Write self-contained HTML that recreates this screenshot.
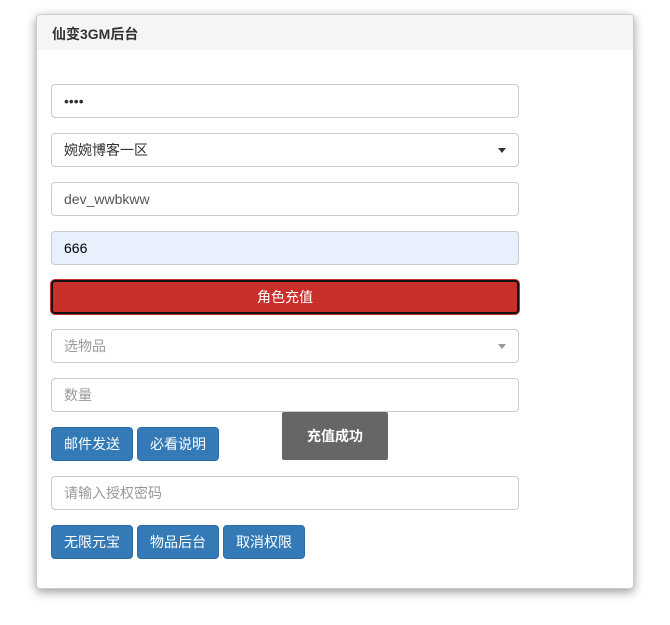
<!DOCTYPE html>
<html><head><meta charset="utf-8"><style>
*{box-sizing:border-box}
body{margin:0;width:670px;height:625px;background:#fff;font-family:"Liberation Sans","Noto Sans CJK SC",sans-serif;font-size:14px;color:#333;position:relative}
.panel{position:absolute;left:36px;top:14px;width:598px;height:575px;border:1px solid #ccc;border-radius:4px;background:#fff;box-shadow:0 3px 10px rgba(0,0,0,.4);overflow:hidden}
.hd{height:35px;background:#f5f5f5;padding:9px 15px;font-weight:bold;font-size:14px;color:#333}
.f{position:absolute;left:14px;width:468px;height:34px;border:1px solid #ccc;border-radius:4px;padding:6px 12px;line-height:20px;background:#fff}
.ph{color:#999}
.btn{position:absolute;height:34px;width:82px;border:1px solid #2e6da4;background:#337ab7;color:#fff;border-radius:4px;text-align:center;line-height:32px}
.caret{position:absolute;right:12px;top:14px;width:0;height:0;border-left:4px solid transparent;border-right:4px solid transparent;border-top:5px solid #333}
</style></head><body>
<div class="panel">
<div class="hd">仙变3GM后台</div>
<div class="f" style="top:69px">••••</div>
<div class="f" style="top:118px">婉婉博客一区<span class="caret"></span></div>
<div class="f" style="top:167px;color:#555">dev_wwbkww</div>
<div class="f" style="top:216px;background:#e8f0fe;color:#000">666</div>
<div class="f" style="top:265px;background:#c9302c;border:2px solid #111;box-shadow:0 0 0 1px #c9302c;color:#fff;text-align:center;line-height:18px">角色充值</div>
<div class="f ph" style="top:314px">选物品<span class="caret" style="border-top-color:#999"></span></div>
<div class="f ph" style="top:363px">数量</div>
<div class="btn" style="left:14px;top:412px">邮件发送</div>
<div class="btn" style="left:100px;top:412px">必看说明</div>
<div class="f ph" style="top:461px">请输入授权密码</div>
<div class="btn" style="left:14px;top:510px">无限元宝</div>
<div class="btn" style="left:100px;top:510px">物品后台</div>
<div class="btn" style="left:186px;top:510px">取消权限</div>
</div>
<div style="position:absolute;left:282px;top:412px;width:106px;height:48px;background:#666;color:#fff;border-radius:2px;text-align:center;line-height:48px;font-weight:bold;font-size:14px">充值成功</div>
</body></html>
